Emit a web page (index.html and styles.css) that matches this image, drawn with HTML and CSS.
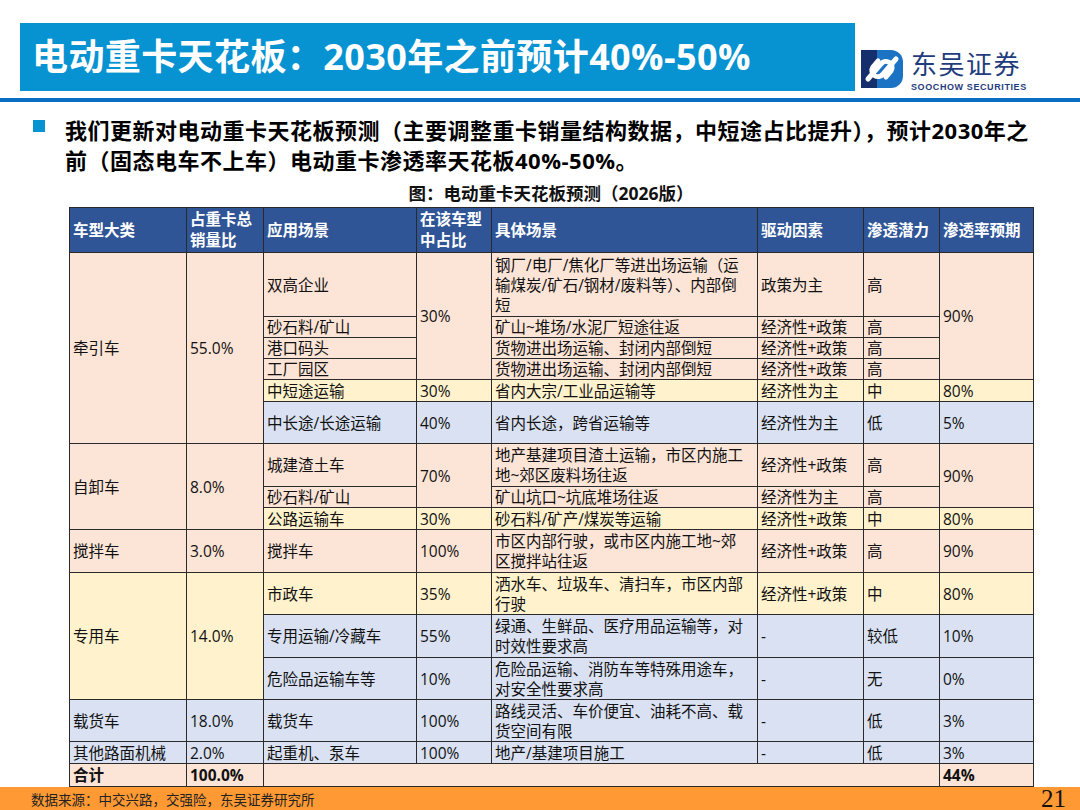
FILE: index.html
```html
<!DOCTYPE html>
<html lang="zh-CN">
<head>
<meta charset="utf-8">
<title>电动重卡天花板</title>
<link rel="stylesheet" href="styles.css">
</head>
<body>
<header class="top">
  <div class="title-bar">电动重卡天花板：2030年之前预计40%-50%</div>
  <div class="logo">
    <svg class="logo-icon" width="42" height="38" viewBox="0 0 42 38">
      <path d="M0 0H24V38H0Z" fill="#142f6b"/>
      <path d="M16 0H30A12 12 0 0 1 42 12V26A12 12 0 0 1 30 38H16Z" fill="#1c73c4"/>
      <g fill="none" stroke="#fff" stroke-width="5" stroke-linecap="round">
        <path d="M7 29L20 14A6 6 0 0 1 30 21L25 27"/>
        <path d="M35 9L22 24A6 6 0 0 1 12 17L17 11"/>
      </g>
    </svg>
    <div class="logo-text">
      <span class="logo-cn">东吴证券</span>
      <span class="logo-en">SOOCHOW SECURITIES</span>
    </div>
  </div>
</header>
<div class="rule"></div>
<section class="lead">
  <span class="sq"></span>
  <p class="lead-text">我们更新对电动重卡天花板预测（主要调整重卡销量结构数据，中短途占比提升），预计2030年之<br>前（固态电车不上车）电动重卡渗透率天花板40%-50%。</p>
</section>
<p class="caption">图：电动重卡天花板预测（2026版）</p>
<table class="grid">
  <colgroup>
    <col class="c1"><col class="c2"><col class="c3"><col class="c4"><col class="c5"><col class="c6"><col class="c7"><col class="c8">
  </colgroup>
  <thead>
    <tr class="r45"><th>车型大类</th><th>占重卡总<br>销量比</th><th>应用场景</th><th>在该车型<br>中占比</th><th>具体场景</th><th>驱动因素</th><th>渗透潜力</th><th>渗透率预期</th></tr>
  </thead>
  <tbody>
    <tr class="r64 pk"><td rowspan="6">牵引车</td><td rowspan="6">55.0%</td><td>双高企业</td><td rowspan="4">30%</td><td>钢厂/电厂/焦化厂等进出场运输（运<br>输煤炭/矿石/钢材/废料等）、内部倒<br>短</td><td>政策为主</td><td>高</td><td rowspan="4">90%</td></tr>
    <tr class="r21 pk"><td>砂石料/矿山</td><td>矿山~堆场/水泥厂短途往返</td><td>经济性+政策</td><td>高</td></tr>
    <tr class="r21 pk"><td>港口码头</td><td>货物进出场运输、封闭内部倒短</td><td>经济性+政策</td><td>高</td></tr>
    <tr class="r21 pk"><td>工厂园区</td><td>货物进出场运输、封闭内部倒短</td><td>经济性+政策</td><td>高</td></tr>
    <tr class="r22 yl"><td>中短途运输</td><td>30%</td><td>省内大宗/工业品运输等</td><td>经济性为主</td><td>中</td><td>80%</td></tr>
    <tr class="r42 bl"><td>中长途/长途运输</td><td>40%</td><td>省内长途，跨省运输等</td><td>经济性为主</td><td>低</td><td>5%</td></tr>
    <tr class="r43 pk"><td rowspan="3">自卸车</td><td rowspan="3">8.0%</td><td>城建渣土车</td><td rowspan="2">70%</td><td>地产基建项目渣土运输，市区内施工<br>地~郊区废料场往返</td><td>经济性+政策</td><td>高</td><td rowspan="2">90%</td></tr>
    <tr class="r21 pk"><td>砂石料/矿山</td><td>矿山坑口~坑底堆场往返</td><td>经济性为主</td><td>高</td></tr>
    <tr class="r22 yl"><td>公路运输车</td><td>30%</td><td>砂石料/矿产/煤炭等运输</td><td>经济性+政策</td><td>中</td><td>80%</td></tr>
    <tr class="r43 pk"><td>搅拌车</td><td>3.0%</td><td>搅拌车</td><td>100%</td><td>市区内部行驶，或市区内施工地~郊<br>区搅拌站往返</td><td>经济性+政策</td><td>高</td><td>90%</td></tr>
    <tr class="r42 yl"><td rowspan="3">专用车</td><td rowspan="3">14.0%</td><td>市政车</td><td>35%</td><td>洒水车、垃圾车、清扫车，市区内部<br>行驶</td><td>经济性+政策</td><td>中</td><td>80%</td></tr>
    <tr class="r43 bl"><td>专用运输/冷藏车</td><td>55%</td><td>绿通、生鲜品、医疗用品运输等，对<br>时效性要求高</td><td>-</td><td>较低</td><td>10%</td></tr>
    <tr class="r42 bl"><td>危险品运输车等</td><td>10%</td><td>危险品运输、消防车等特殊用途车，<br>对安全性要求高</td><td>-</td><td>无</td><td>0%</td></tr>
    <tr class="r42 bl"><td>载货车</td><td>18.0%</td><td>载货车</td><td>100%</td><td>路线灵活、车价便宜、油耗不高、载<br>货空间有限</td><td>-</td><td>低</td><td>3%</td></tr>
    <tr class="r22 bl"><td>其他路面机械</td><td>2.0%</td><td>起重机、泵车</td><td>100%</td><td>地产/基建项目施工</td><td>-</td><td>低</td><td>3%</td></tr>
    <tr class="r23 pk tot"><td>合计</td><td>100.0%</td><td colspan="5"></td><td>44%</td></tr>
  </tbody>
</table>
<footer class="foot">
  <span class="src">数据来源：中交兴路，交强险，东吴证券研究所</span>
  <span class="pg">21</span>
</footer>
</body>
</html>
```

FILE: styles.css
```css
* { box-sizing: border-box; }
html, body { margin: 0; padding: 0; }
body {
  width: 1080px;
  height: 810px;
  overflow: hidden;
  background: #fff;
  font-family: "Open Sans", "Noto Sans CJK SC", sans-serif;
  color: #111;
  display: flex;
  flex-direction: column;
}
.top {
  display: flex;
  height: 91px;
  padding-top: 23px;
  flex: none;
}
.title-bar {
  margin-left: 20px;
  width: 835px;
  height: 68px;
  background: #0792d2;
  padding-left: 12px;
  display: flex;
  align-items: center;
  color: #fff;
  font-weight: 700;
  font-size: 36px;
  line-height: 1;
  letter-spacing: 0.4px;
  white-space: nowrap;
}
.logo {
  margin-left: 6px;
  margin-top: 24px;
  display: flex;
  align-items: flex-start;
  gap: 8px;
}
.logo-icon { flex: none; display: block; margin-top: 3px; }
.logo-text {
  display: flex;
  flex-direction: column;
}
.logo-cn {
  font-family: "Noto Sans CJK SC", sans-serif;
  font-size: 26px;
  line-height: 31px;
  color: #1f3c7c;
  letter-spacing: 1.5px;
}
.logo-en {
  margin-top: 4px;
  font-family: "Liberation Sans", sans-serif;
  font-weight: 700;
  font-size: 9px;
  line-height: 11px;
  color: #1f3c7c;
  letter-spacing: 0.6px;
}
.rule {
  flex: none;
  height: 4px;
  margin-top: 7px;
  background: #0a6fc2;
}
.lead {
  display: flex;
  padding-left: 33px;
  margin-top: 13px;
}
.sq {
  flex: none;
  width: 12px;
  height: 12px;
  margin-top: 5px;
  margin-right: 20px;
  background: #0792d2;
}
.lead-text {
  margin: 0;
  font-size: 22px;
  font-weight: 700;
  line-height: 30px;
  letter-spacing: 0.5px;
  color: #000;
  white-space: nowrap;
}
.caption {
  margin: 7px 0 0 69px;
  width: 964px;
  text-align: center;
  font-size: 17.5px;
  font-weight: 700;
  line-height: 22px;
  color: #111;
}
.grid {
  margin: 3px 0 0 69px;
  width: 964px;
  table-layout: fixed;
  border-collapse: collapse;
  font-size: 15.5px;
  line-height: 20px;
  color: #111;
}
.c1 { width: 117px; }
.c2 { width: 77px; }
.c3 { width: 153px; }
.c4 { width: 75px; }
.c5 { width: 266px; }
.c6 { width: 106px; }
.c7 { width: 76px; }
.c8 { width: 94px; }
.grid th, .grid td {
  border: 1px solid #2a2a2a;
  padding: 0 2px 0 3px;
  text-align: left;
  vertical-align: middle;
  white-space: nowrap;
  overflow: hidden;
}
.grid th {
  background: #2f5597;
  color: #fff;
  font-weight: 700;
  line-height: 21px;
}
.r45 { height: 45px; }
.r64 { height: 64px; }
.r21 { height: 21px; }
.r22 { height: 22px; }
.r23 { height: 23px; }
.r42 { height: 42px; }
.r43 { height: 43px; }
.pk td { background: #fce4d6; }
.yl td { background: #fff2cc; }
.bl td { background: #d9e1f2; }
.tot td { font-weight: 700; }
.foot {
  margin-top: auto;
  height: 24px;
  flex: none;
  background: #ff9933;
  display: flex;
  justify-content: space-between;
  align-items: center;
  padding: 0 14px 0 31px;
}
.src {
  font-family: "Noto Sans CJK SC", sans-serif;
  font-size: 13.5px;
  color: #222;
}
.pg {
  font-family: "Liberation Serif", serif;
  font-size: 25px;
  line-height: 24px;
  color: #111;
}
```
